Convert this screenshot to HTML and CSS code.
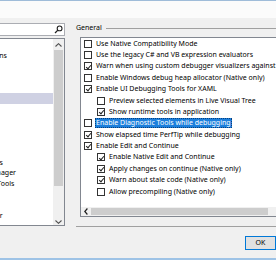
FILE: index.html
```html
<!DOCTYPE html>
<html>
<head>
<meta charset="utf-8">
<link rel="stylesheet" href="styles.css">
</head>
<body>
<div class="window">
  <div class="titlebar"></div>
  <div class="main">
    <div class="nav">
      <div class="search">
        <svg class="search-icon" width="9" height="9" viewBox="0 0 9 9"><circle cx="5.6" cy="3.4" r="2.4" fill="none" stroke="#222" stroke-width="1.1"/><line x1="3.9" y1="5.1" x2="1" y2="8" stroke="#222" stroke-width="1.3"/></svg>
      </div>
      <div class="tree">
        <div class="tree-items">
          <div class="node">Environment</div>
          <div class="node">Projects and Solutions</div>
          <div class="node">Source Control</div>
          <div class="node">Work Items</div>
          <div class="node">Text Editor</div>
          <div class="node selected">Debugging</div>
          <div class="node">IntelliTrace</div>
          <div class="node">Performance Tools</div>
          <div class="node">Container Tools</div>
          <div class="node">Cross Platform</div>
          <div class="node">Database Tools</div>
          <div class="node">Graphics Diagnostics</div>
          <div class="node">NuGet Package Manager</div>
          <div class="node">Productivity Power Tools</div>
          <div class="node">SQL Server Tools</div>
          <div class="node">Test</div>
          <div class="node">Web Forms Designer</div>
          <div class="node">XAML Designer</div>
        </div>
        <div class="vscroll">
          <div class="arrow up"><svg width="7" height="4" viewBox="0 0 7 4"><polyline points="0.5,3.5 3.5,0.7 6.5,3.5" fill="none" stroke="#505050" stroke-width="1.1"/></svg></div>
          <div class="vtrack"><div class="vthumb"></div></div>
          <div class="arrow down"><svg width="7" height="4" viewBox="0 0 7 4"><polyline points="0.5,0.5 3.5,3.3 6.5,0.5" fill="none" stroke="#505050" stroke-width="1.1"/></svg></div>
        </div>
      </div>
    </div>
    <div class="page">
      <div class="group-head"><span class="group-title">General</span><span class="rule"></span></div>
      <div class="list">
        <div class="rows">
          <div class="row"><span class="cb"></span><span class="label">Use Native Compatibility Mode</span></div>
          <div class="row"><span class="cb"></span><span class="label">Use the legacy C# and VB expression evaluators</span></div>
          <div class="row"><span class="cb on"></span><span class="label">Warn when using custom debugger visualizers against potentially unsafe processes (Managed only)</span></div>
          <div class="row"><span class="cb"></span><span class="label">Enable Windows debug heap allocator (Native only)</span></div>
          <div class="row"><span class="cb on"></span><span class="label">Enable UI Debugging Tools for XAML</span></div>
          <div class="row sub"><span class="cb"></span><span class="label">Preview selected elements in Live Visual Tree</span></div>
          <div class="row sub"><span class="cb on"></span><span class="label">Show runtime tools in application</span></div>
          <div class="row"><span class="cb"></span><span class="label focused">Enable Diagnostic Tools while debugging</span></div>
          <div class="row"><span class="cb on"></span><span class="label">Show elapsed time PerfTip while debugging</span></div>
          <div class="row"><span class="cb on"></span><span class="label">Enable Edit and Continue</span></div>
          <div class="row sub"><span class="cb on"></span><span class="label">Enable Native Edit and Continue</span></div>
          <div class="row sub"><span class="cb on"></span><span class="label">Apply changes on continue (Native only)</span></div>
          <div class="row sub"><span class="cb on"></span><span class="label">Warn about stale code (Native only)</span></div>
          <div class="row sub"><span class="cb"></span><span class="label">Allow precompiling (Native only)</span></div>
        </div>
        <div class="hscroll">
          <div class="harrow"><svg width="4" height="7" viewBox="0 0 4 7"><polyline points="3.4,0.5 0.8,3.5 3.4,6.5" fill="none" stroke="#202020" stroke-width="1.2"/></svg></div>
          <div class="hthumb"></div>
          <div class="htrack"></div>
        </div>
      </div>
    </div>
  </div>
  <div class="separator"></div>
  <div class="buttons"><button class="ok">OK</button></div>
  <div class="bottom-border"></div>
</div>
</body>
</html>
```
FILE: styles.css
```css
* { box-sizing: border-box; }
html, body { margin: 0; padding: 0; }
body {
  width: 276px;
  height: 260px;
  overflow: hidden;
  background: #f0f0f0;
  font-family: "Noto Sans", "Open Sans", sans-serif;
  font-size: 7px;
  color: #000;
}
.window { display: flex; flex-direction: column; width: 276px; height: 260px; }
.titlebar { flex: none; height: 18px; border-top: 1px solid #9fbcd9; background: #fbfbfb; }
.main { flex: none; display: flex; height: 208px; padding-top: 5px; }

.nav { flex: none; width: 215px; margin-left: -150px; display: flex; flex-direction: column; gap: 2px; }
.search {
  flex: none; height: 13px; background: #fff; border: 1px solid #abadb3;
  display: flex; justify-content: flex-end; align-items: center; padding-right: 1px;
}
.tree { flex: none; height: 188px; background: #fff; border: 1px solid #828790; display: flex; }
.tree-items { flex: 1; overflow: hidden; padding-top: 1px; }
.node { height: 10.7px; line-height: 10.7px; padding-left: 83px; white-space: nowrap; }
.node.selected { background: #cfd1e3; }
.vscroll { flex: none; width: 11px; background: #f0f0f0; display: flex; flex-direction: column; }
.arrow { flex: none; height: 11px; display: flex; justify-content: center; align-items: center; }
.arrow.down { align-items: flex-end; padding-bottom: 1px; }
.vtrack { flex: 1; padding: 0 1px; }
.vthumb { height: 136px; background: #cdcdcd; }

.page { flex: none; width: 200px; margin-left: 11px; display: flex; flex-direction: column; }
.group-head { flex: none; height: 10px; display: flex; align-items: center; gap: 4px; margin-bottom: 4px; }
.group-title { line-height: 10px; }
.rule { flex: 1; height: 1px; background: #a0a0a0; }
.list {
  flex: none; margin-left: 4px; width: 260px; height: 180px;
  background: #fff; border: 1px solid #828790; display: flex; flex-direction: column;
}
.rows { flex: 1; overflow: hidden; }
.row { height: 11.38px; display: flex; align-items: center; padding-left: 3px; white-space: nowrap; }
.row.sub { padding-left: 16px; }
.cb {
  flex: none; width: 8px; height: 8px; margin-right: 3px;
  border: 1px solid #333; background: #fff; position: relative;
}
.cb.on::after {
  content: ""; position: absolute; left: 1.6px; top: 0.2px;
  width: 2px; height: 4px; border: solid #222; border-width: 0 1px 1px 0;
  transform: rotate(40deg);
}
.label { padding: 0 1px; line-height: 10px; }
.label.focused { background: #1c7fdc; color: #fff; outline: 1px dotted #0a3f7a; outline-offset: -1px; }
.hscroll { flex: none; height: 9px; background: #f0f0f0; display: flex; }
.harrow { flex: none; width: 10px; display: flex; justify-content: center; align-items: center; }
.hthumb { flex: none; width: 177px; background: #cdcdcd; margin: 1px 0; }
.htrack { flex: 1; }

.separator { flex: none; height: 1px; margin-left: 76px; background: #a0a0a0; }
.buttons { flex: none; display: flex; padding-left: 245px; margin-top: 9px; }
.ok {
  width: 52px; height: 14px; padding: 0; margin: 0;
  border: 1px solid #0078d7; background: #e1e1e1;
  font: inherit; color: #000; line-height: 12px;
}
.bottom-border { flex: none; margin-top: 8px; height: 2px; background: #9ec3e6; }
```
